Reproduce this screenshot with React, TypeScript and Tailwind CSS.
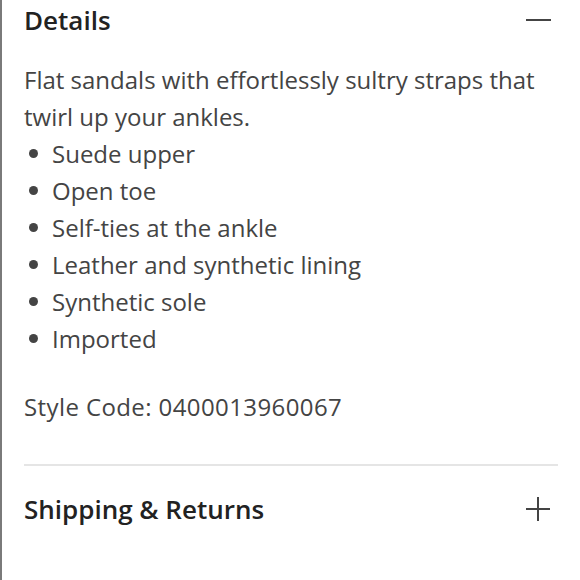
export default function App() {
  const items = [
    "Suede upper",
    "Open toe",
    "Self-ties at the ankle",
    "Leather and synthetic lining",
    "Synthetic sole",
    "Imported",
  ];
  return (
    <div className="w-[580px] h-[580px] bg-white border-l-2 border-[#7a7a7a] overflow-hidden" style={{ fontFamily: "'Open Sans', sans-serif" }}>
      <div className="pl-[22px] pr-[22px]">
        <div className="flex items-center justify-between h-[40px]">
          <div className="text-[26px] font-semibold text-[#222]">Details</div>
          <div className="w-[25px] h-[2px] bg-[#444] mr-[7px]" />
        </div>
        <div className="text-[24px] leading-[37px] text-[#444] mt-[21px]">
          <p>Flat sandals with effortlessly sultry straps that twirl up your ankles.</p>
          <ul>
            {items.map((t) => (
              <li key={t} className="flex items-center">
                <span className="w-[9px] h-[9px] rounded-full bg-[#444] ml-[5px] mr-[14px]" />
                {t}
              </li>
            ))}
          </ul>
          <p className="mt-[31px] tracking-[0.4px]">Style Code: 0400013960067</p>
        </div>
        <div className="h-[2px] bg-[#e5e5e5] mt-[39px]" />
        <div className="flex items-center justify-between h-[86px]">
          <div className="text-[26px] font-semibold text-[#222]">Shipping &amp; Returns</div>
          <svg width="26" height="26" viewBox="0 0 26 26" className="mr-[7px]">
            <path d="M13 1v24M1 13h24" stroke="#444" strokeWidth="2" />
          </svg>
        </div>
      </div>
    </div>
  );
}
